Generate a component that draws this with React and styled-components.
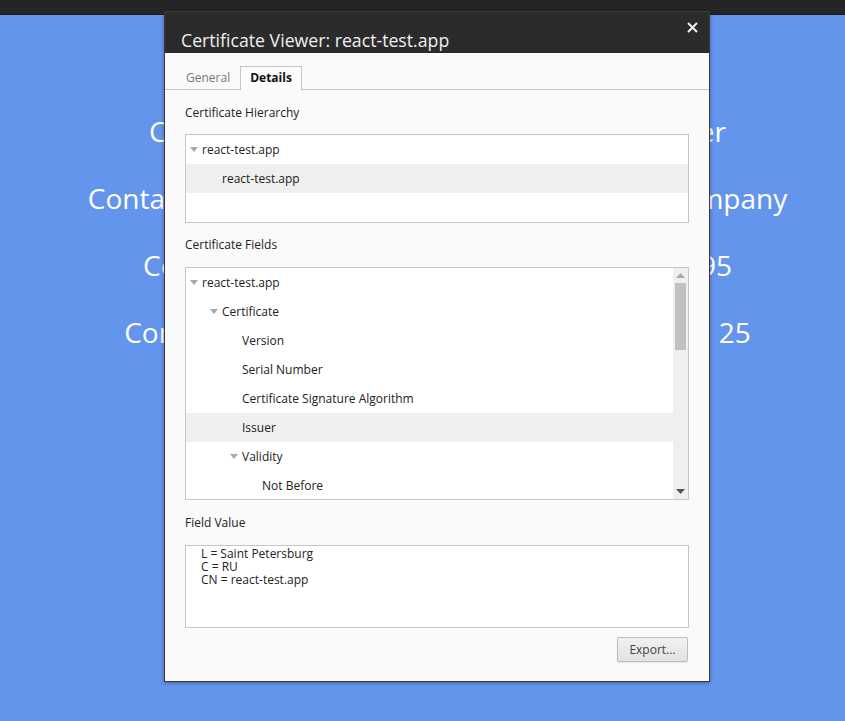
import React from 'react'
import styled, { createGlobalStyle } from 'styled-components'

const GlobalStyle = createGlobalStyle`
  html, body {
    margin: 0;
    padding: 0;
    height: 100%;
    overflow: hidden;
  }
  body {
    font-family: "Open Sans", "Noto Sans", sans-serif;
    background: #6495ed;
  }
`

const hierarchy = [
  { label: 'react-test.app', level: 0, open: true },
  { label: 'react-test.app', level: 1, selected: true },
]

const fields = [
  { label: 'react-test.app', level: 0, open: true },
  { label: 'Certificate', level: 1, open: true },
  { label: 'Version', level: 2 },
  { label: 'Serial Number', level: 2 },
  { label: 'Certificate Signature Algorithm', level: 2 },
  { label: 'Issuer', level: 2, selected: true },
  { label: 'Validity', level: 2, open: true },
  { label: 'Not Before', level: 3 },
]

const backdropLines = [
  'Certificate Owner: React Test App Developer',
  'Contacts: Ivan Petrov, Saint Petersburg Test Company',
  'Contact phone numbers: +7 (8812) 555-01-95',
  'Company employees in Saint Petersburg city: 25',
]

const TreeRow = ({ row }) => (
  <Row selected={row.selected} level={row.level}>
    {row.open ? <Arrow /> : <ArrowSpace />}
    <span>{row.label}</span>
  </Row>
)

const App = () => {
  return (
    <Page>
      <GlobalStyle />
      <TopBar />
      <Stage>
        <Backdrop>
          {backdropLines.map((l, i) => (
            <BackdropLine key={i}>{l}</BackdropLine>
          ))}
        </Backdrop>

        <Dialog>
          <TitleBar>
            <Title>Certificate Viewer: react-test.app</Title>
            <Close>
              <svg width="11" height="11" viewBox="0 0 11 11">
                <path d="M1 1L10 10M10 1L1 10" stroke="#f2f2f2" strokeWidth="2" />
              </svg>
            </Close>
          </TitleBar>

          <Body>
            <Tabs>
              <Tab>General</Tab>
              <Tab active>Details</Tab>
            </Tabs>

            <Content>
              <Label top={15} bottom={13}>Certificate Hierarchy</Label>
              <Box height={89}>
                <TreeList>
                  {hierarchy.map((r, i) => (
                    <TreeRow key={i} row={r} />
                  ))}
                </TreeList>
              </Box>

              <Label top={14}>Certificate Fields</Label>
              <Box height={233}>
                <TreeList>
                  {fields.map((r, i) => (
                    <TreeRow key={i} row={r} />
                  ))}
                </TreeList>
                <Scrollbar>
                  <ScrollArrow>
                    <svg width="9" height="5" viewBox="0 0 9 5">
                      <path d="M0 5L4.5 0L9 5Z" fill="#a8a8a8" />
                    </svg>
                  </ScrollArrow>
                  <Track>
                    <Thumb />
                  </Track>
                  <ScrollArrow>
                    <svg width="9" height="5" viewBox="0 0 9 5">
                      <path d="M0 0L9 0L4.5 5Z" fill="#555" />
                    </svg>
                  </ScrollArrow>
                </Scrollbar>
              </Box>

              <Label top={15}>Field Value</Label>
              <ValueBox>
                L = Saint Petersburg{'\n'}C = RU{'\n'}CN = react-test.app
              </ValueBox>

              <Footer>
                <Button>Export...</Button>
              </Footer>
            </Content>
          </Body>
        </Dialog>
      </Stage>
    </Page>
  )
}

export default App

const Page = styled.div`
  width: 845px;
  height: 721px;
  display: flex;
  flex-direction: column;
  background: #6495ed;
  overflow: hidden;
`

const TopBar = styled.div`
  height: 14px;
  flex-shrink: 0;
  background: #252525;
  border-bottom: 1px solid #1b1b1b;
`

const Stage = styled.div`
  position: relative;
  flex: 1;
`

const Backdrop = styled.div`
  display: flex;
  flex-direction: column;
  align-items: center;
  padding-top: 99px;
  padding-left: 30px;
  gap: 33px;
`

const BackdropLine = styled.div`
  color: #fff;
  font-size: 28px;
  line-height: 34px;
  white-space: nowrap;
`

const Dialog = styled.div`
  position: absolute;
  left: 164px;
  top: -4px;
  width: 544px;
  height: 669px;
  border: 1px solid #3a3a3a;
  background: #fafafa;
  display: flex;
  flex-direction: column;
  box-shadow: 0 1px 4px rgba(0, 0, 0, 0.35);
`

const TitleBar = styled.div`
  height: 41px;
  background: #2b2b2b;
  display: flex;
  align-items: flex-end;
  justify-content: space-between;
  padding: 0 11px 0 16px;
  flex-shrink: 0;
`

const Title = styled.div`
  color: #f0f0f0;
  font-size: 17.7px;
  line-height: 20px;
  padding-bottom: 3px;
`

const Close = styled.div`
  align-self: flex-start;
  margin-top: 10px;
  display: flex;
`

const Body = styled.div`
  flex: 1;
  display: flex;
  flex-direction: column;
`

const Tabs = styled.div`
  display: flex;
  align-items: flex-end;
  height: 36px;
  padding-left: 11px;
  border-bottom: 1px solid #c4c4c4;
`

const Tab = styled.div`
  height: 24px;
  box-sizing: border-box;
  padding: 0 9px;
  font-size: 12px;
  line-height: 22px;
  color: ${(p) => (p.active ? '#111' : '#777')};
  font-weight: ${(p) => (p.active ? 700 : 400)};
  border: 1px solid ${(p) => (p.active ? '#c4c4c4' : 'transparent')};
  border-bottom: none;
  background: ${(p) => (p.active ? '#fcfcfc' : 'transparent')};
  margin-bottom: -1px;
`

const Content = styled.div`
  padding: 0 20px;
  display: flex;
  flex-direction: column;
`

const Label = styled.div`
  font-size: 12px;
  line-height: 16px;
  color: #222;
  padding: ${(p) => p.top || 15}px 0 ${(p) => p.bottom || 14}px;
`

const Box = styled.div`
  height: ${(p) => p.height}px;
  box-sizing: border-box;
  border: 1px solid #c6c6c6;
  background: #fff;
  display: flex;
  overflow: hidden;
`

const TreeList = styled.div`
  flex: 1;
  display: flex;
  flex-direction: column;
`

const Row = styled.div`
  height: 29px;
  flex-shrink: 0;
  display: flex;
  align-items: center;
  padding-left: ${(p) => 4 + p.level * 20}px;
  background: ${(p) => (p.selected ? '#efefef' : 'transparent')};
  font-size: 12px;
  color: #222;
`

const Arrow = styled.span`
  width: 0;
  height: 0;
  border-left: 4px solid transparent;
  border-right: 4px solid transparent;
  border-top: 5px solid #a8a8a8;
  margin-right: 4px;
`

const ArrowSpace = styled.span`
  width: 12px;
`

const Scrollbar = styled.div`
  width: 15px;
  flex-shrink: 0;
  background: #efefef;
  display: flex;
  flex-direction: column;
`

const ScrollArrow = styled.div`
  height: 15px;
  display: flex;
  align-items: center;
  justify-content: center;
`

const Track = styled.div`
  flex: 1;
  padding: 0 2px;
`

const Thumb = styled.div`
  height: 67px;
  background: #c1c1c1;
`

const ValueBox = styled.div`
  height: 83px;
  box-sizing: border-box;
  border: 1px solid #c6c6c6;
  background: #fff;
  font-size: 12px;
  line-height: 13px;
  color: #222;
  padding: 1px 15px;
  white-space: pre;
`

const Footer = styled.div`
  display: flex;
  justify-content: flex-end;
  padding-top: 9px;
`

const Button = styled.button`
  width: 71px;
  height: 25px;
  margin-right: 1px;
  border: 1px solid #bdbdbd;
  border-radius: 2px;
  background: linear-gradient(#f1f1f1, #e2e2e2);
  font-family: "Open Sans", "Noto Sans", sans-serif;
  font-size: 12px;
  color: #444;
  padding: 0;
  box-shadow: 0 1px 1px rgba(0, 0, 0, 0.08);
`
